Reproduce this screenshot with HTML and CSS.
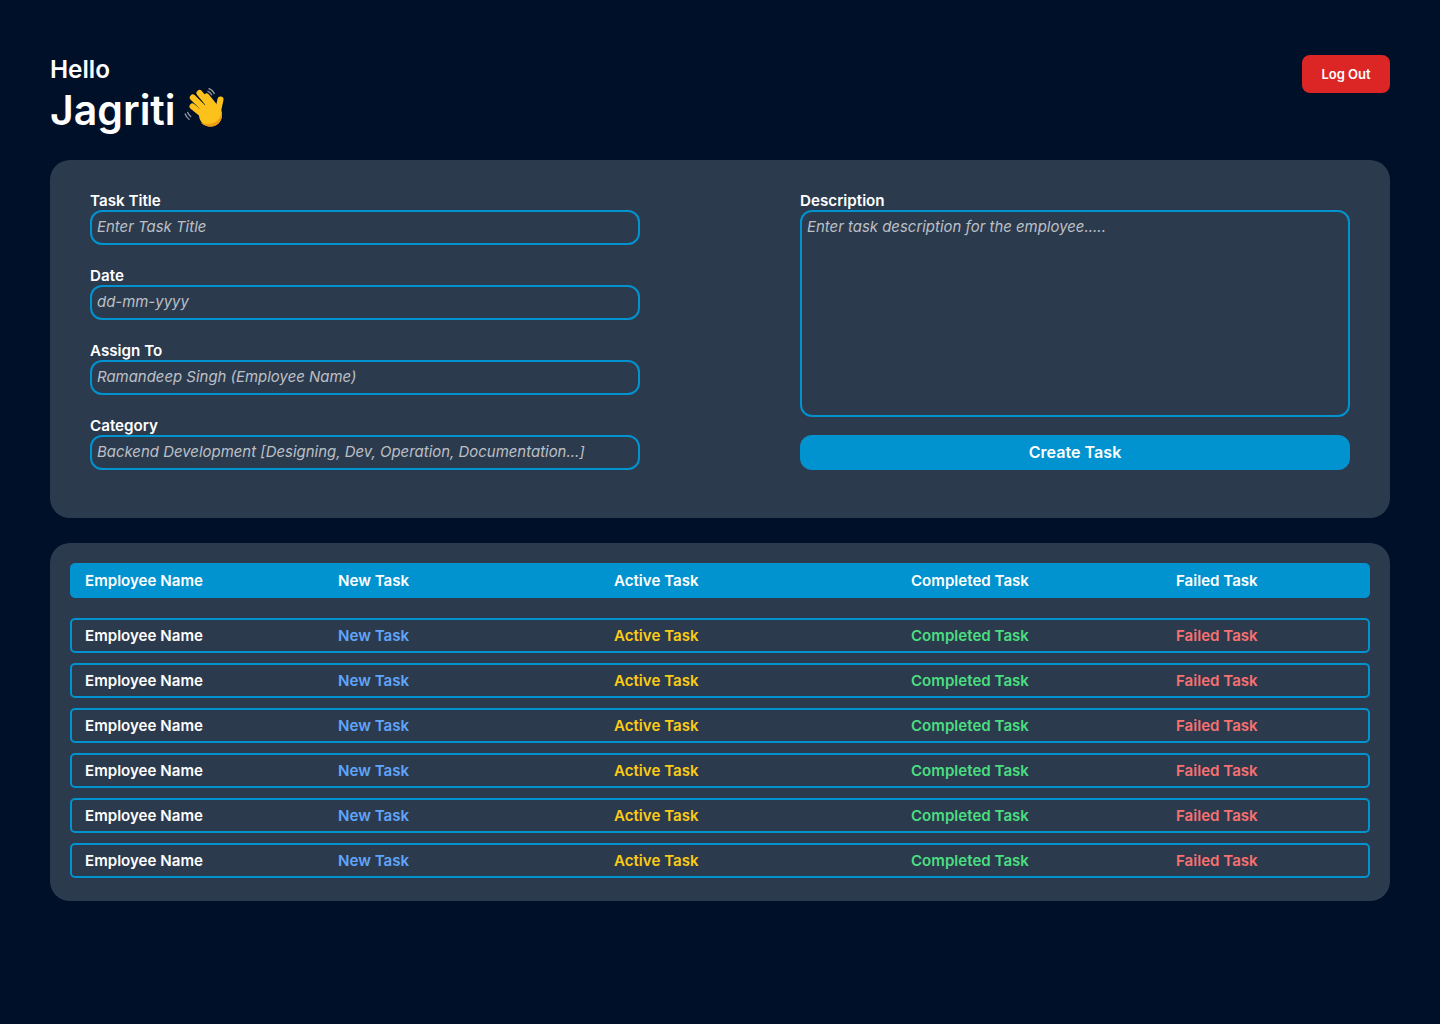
FILE: index.html
```html
<!DOCTYPE html>
<html>
<head>
  <title>Admin Dashboard</title>
  <link rel="stylesheet" href="styles.css">
</head>
<body>
  <header class="top-bar">
    <div>
      <p class="hello">Hello</p>
      <h1 class="user-name">Jagriti
        <svg class="wave" viewBox="0 0 42 42" width="42" height="42" aria-hidden="true">
          <path d="M1 26.500c.8 2.500 2.300 4.600 4.500 6.200M3.500 25c.7 2 1.900 3.700 3.600 5" fill="none" stroke="#8d929b" stroke-width="1.400"/>
          <path d="M24.500 1.500c2.800.9 4.900 2.900 6 5.600M23.500 4.200c2 .7 3.500 2.100 4.400 4" fill="none" stroke="#8d929b" stroke-width="1.400"/>
          <g fill="none" stroke="#fcc21b" stroke-width="6" stroke-linecap="round">
            <path d="M8.500 19.500 19 28"/>
            <path d="M8.800 10.500 22 23.500"/>
            <path d="M15.500 6 27 20"/>
            <path d="M22.500 9.500 31 20"/>
            <path d="M36.500 12.500 34 24"/>
          </g>
          <circle cx="26.500" cy="28" r="11.500" fill="#fcc21b"/>
          <path d="M16.500 35.500c3 3 7 4.300 11 4 6.500-.6 11-6 10.500-12.500-.1-1.500-.3-3-.5-4.500-.3 3.800-.8 7.500-3.500 10.500-4 4.300-11.500 5.300-17.500 2.500z" fill="#ee9c13"/>
        </svg>
      </h1>
    </div>
    <button class="logout-btn">Log Out</button>
  </header>

  <section class="panel task-form">
    <div class="form-col">
      <div class="field">
        <label>Task Title</label>
        <input type="text" placeholder="Enter Task Title">
      </div>
      <div class="field">
        <label>Date</label>
        <input type="text" placeholder="dd-mm-yyyy">
      </div>
      <div class="field">
        <label>Assign To</label>
        <input type="text" placeholder="Ramandeep Singh (Employee Name)">
      </div>
      <div class="field">
        <label>Category</label>
        <input type="text" placeholder="Backend Development [Designing, Dev, Operation, Documentation...]">
      </div>
    </div>
    <div class="form-col">
      <div class="field desc-field">
        <label>Description</label>
        <textarea placeholder="Enter task description for the employee....."></textarea>
      </div>
      <button class="create-btn">Create Task</button>
    </div>
  </section>

  <section class="panel task-list">
    <div class="row head-row">
      <span>Employee Name</span>
      <span>New Task</span>
      <span>Active Task</span>
      <span>Completed Task</span>
      <span>Failed Task</span>
    </div>
    <div class="rows">
      <div class="row">
        <span>Employee Name</span>
        <span class="new">New Task</span>
        <span class="active">Active Task</span>
        <span class="done">Completed Task</span>
        <span class="failed">Failed Task</span>
      </div>
      <div class="row">
        <span>Employee Name</span>
        <span class="new">New Task</span>
        <span class="active">Active Task</span>
        <span class="done">Completed Task</span>
        <span class="failed">Failed Task</span>
      </div>
      <div class="row">
        <span>Employee Name</span>
        <span class="new">New Task</span>
        <span class="active">Active Task</span>
        <span class="done">Completed Task</span>
        <span class="failed">Failed Task</span>
      </div>
      <div class="row">
        <span>Employee Name</span>
        <span class="new">New Task</span>
        <span class="active">Active Task</span>
        <span class="done">Completed Task</span>
        <span class="failed">Failed Task</span>
      </div>
      <div class="row">
        <span>Employee Name</span>
        <span class="new">New Task</span>
        <span class="active">Active Task</span>
        <span class="done">Completed Task</span>
        <span class="failed">Failed Task</span>
      </div>
      <div class="row">
        <span>Employee Name</span>
        <span class="new">New Task</span>
        <span class="active">Active Task</span>
        <span class="done">Completed Task</span>
        <span class="failed">Failed Task</span>
      </div>
    </div>
  </section>
</body>
</html>
```

FILE: styles.css
```css
* {
  box-sizing: border-box;
}

body {
  margin: 0;
  min-height: 1024px;
  padding: 55px 50px 0;
  background-color: #001029;
  color: #fff;
  font-family: Inter, "Liberation Sans", sans-serif;
}

.top-bar {
  display: flex;
  justify-content: space-between;
  align-items: flex-start;
  height: 105px;
}

.hello {
  margin: 0 0 2px;
  font-size: 24.300px;
  line-height: 28px;
  font-weight: 600;
}

.user-name {
  display: flex;
  align-items: center;
  gap: 8px;
  margin: 0;
  font-size: 41px;
  line-height: 50px;
  font-weight: 600;
}

.wave {
  flex: none;
  margin-bottom: 4px;
}

.logout-btn {
  width: 88px;
  height: 38px;
  border: none;
  border-radius: 8px;
  background-color: #dc2626;
  color: #fff;
  font-family: inherit;
  font-size: 13px;
  font-weight: 600;
}

.panel {
  border-radius: 20px;
  background-color: #2c3a4e;
}

.task-form {
  display: flex;
  justify-content: space-between;
  height: 358px;
  padding: 32px 40px 0;
}

.form-col {
  width: 550px;
}

.field {
  margin-bottom: 22px;
}

.desc-field {
  margin-bottom: 18px;
}

.field label {
  display: block;
  height: 18px;
  font-size: 15.200px;
  line-height: 18px;
  font-weight: 600;
}

.field input,
.field textarea {
  display: block;
  width: 100%;
  height: 35px;
  padding: 0 5px 2px;
  border: 2px solid #0093d0;
  border-radius: 12px;
  outline: none;
  background: transparent;
  color: #fff;
  font-family: inherit;
  font-size: 14.950px;
}

.field textarea {
  height: 207px;
  padding: 6px 5px;
  resize: none;
}

input::placeholder,
textarea::placeholder {
  color: #bcc0c6;
  font-style: italic;
  opacity: 1;
}

.create-btn {
  display: block;
  width: 100%;
  height: 35px;
  padding-bottom: 2px;
  border: none;
  border-radius: 12px;
  background-color: #0093d0;
  color: #fff;
  font-family: inherit;
  font-size: 16.100px;
  font-weight: 600;
}

.task-list {
  height: 358px;
  margin-top: 25px;
  padding: 20px;
}

.row {
  display: grid;
  grid-template-columns: 253px 276px 297px 265px 1fr;
  align-items: center;
  height: 35px;
  padding: 0 13px;
  border: 2px solid #0093d0;
  border-radius: 5px;
  font-size: 15.100px;
  font-weight: 600;
}

.head-row {
  background-color: #0093d0;
}

.rows {
  display: flex;
  flex-direction: column;
  gap: 10px;
  margin-top: 20px;
}

.new {
  color: #60a5fa;
}

.active {
  color: #facc15;
}

.done {
  color: #4ade80;
}

.failed {
  color: #f87171;
}
```
